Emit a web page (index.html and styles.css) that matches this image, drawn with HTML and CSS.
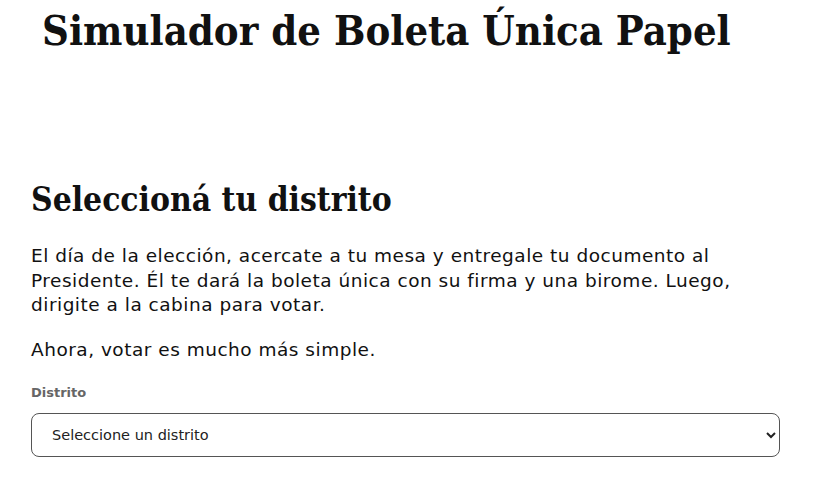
FILE: index.html
```html
<!DOCTYPE html>
<html lang="es">
  <head>
    <meta charset="UTF-8" />
    <meta name="viewport" content="width=device-width, initial-scale=1.0" />
    <title>Simulador de Boleta Única Papel</title>
    <link rel="stylesheet" href="styles.css">
  </head>
  <body>
    <header class="site-header">
      <h1>Simulador de Boleta Única Papel</h1>
    </header>
    <main class="container">
      <h2>Seleccioná tu distrito</h2>
      <p>
        El día de la elección, acercate a tu mesa y entregale tu documento al
        Presidente. Él te dará la boleta única con su firma y una birome. Luego,
        dirigite a la cabina para votar.
      </p>
      <p class="lead-out">Ahora, votar es mucho más simple.</p>
      <form class="district-form">
        <label for="distrito">Distrito</label>
        <select id="distrito" name="distrito">
          <option value="">Seleccione un distrito</option>
        </select>
      </form>
    </main>
  </body>
</html>
```

FILE: styles.css
```css
body {
  font-family: "DejaVu Sans", sans-serif;
  color: #111;
  background: #fff;
  margin: 0;
  padding: 0;
}
.site-header {
  padding: 0 42px;
  height: 128px;
}
h1 {
  font-family: "DejaVu Serif Condensed", "DejaVu Serif", serif;
  font-weight: bold;
  font-size: 41.4px;
  line-height: 56px;
  margin: 0;
  padding-top: 3px;
  white-space: nowrap;
}
.container {
  padding: 0 31px;
  width: 749px;
}
h2 {
  font-family: "DejaVu Serif Condensed", "DejaVu Serif", serif;
  font-weight: bold;
  font-size: 33.3px;
  line-height: 40px;
  margin: 52px 0 24px;
}
p {
  font-size: 18.5px;
  line-height: 24.5px;
  letter-spacing: 0.5px;
  margin: 0 0 20px;
}
p.lead-out {
  margin-bottom: 23px;
}
.district-form label {
  display: block;
  font-size: 13px;
  font-weight: bold;
  color: #666;
  margin-bottom: 13px;
}
.district-form select {
  width: 100%;
  height: 44px;
  padding: 0 16px;
  font-family: "DejaVu Sans", sans-serif;
  font-size: 14.5px;
  color: #222;
  background: #fff;
  border: 1px solid #555;
  border-radius: 8px;
}
```
